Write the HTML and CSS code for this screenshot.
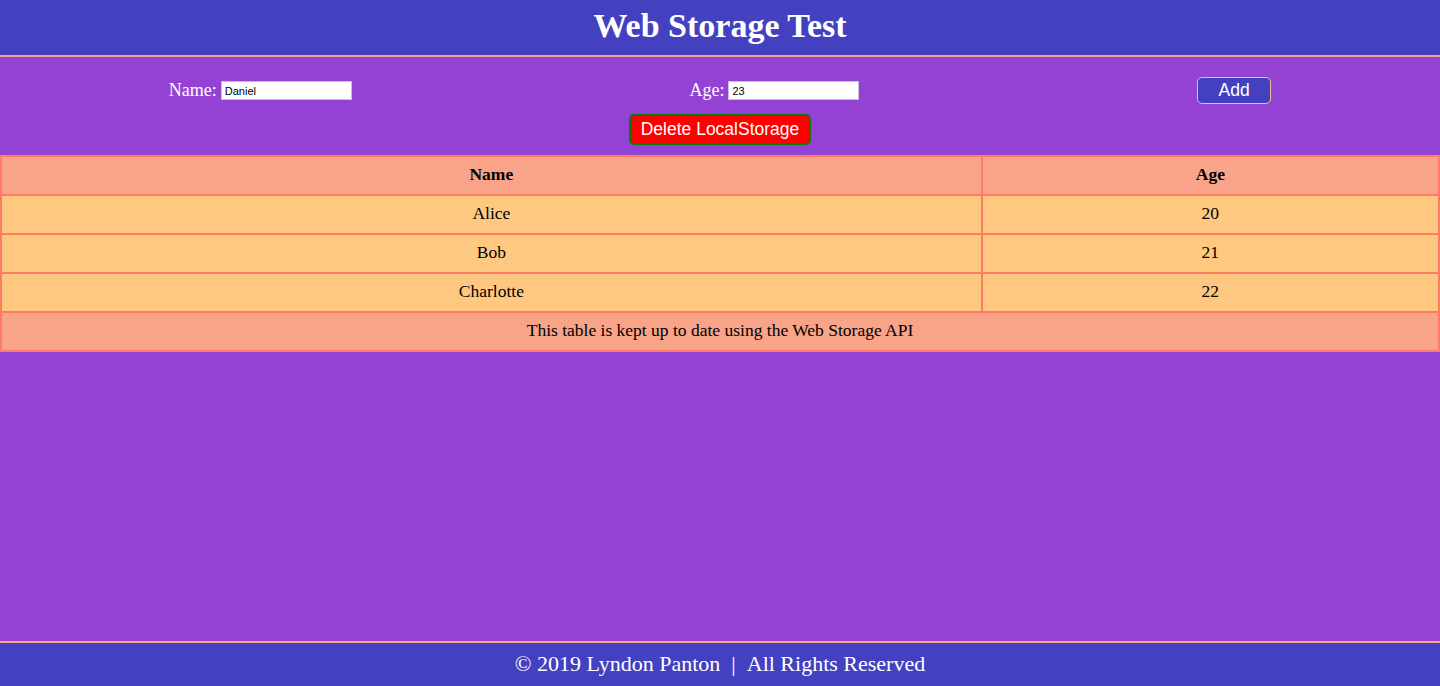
FILE: index.html
```html
<!DOCTYPE html>
<html lang="en">
<head>
<meta charset="utf-8">
<title>Web Storage Test</title>
<link rel="stylesheet" href="styles.css">
</head>
<body>
<header class="site-header">
  <h1 class="title">Web Storage Test</h1>
</header>
<main class="main">
  <form class="entry-form">
    <div class="fields">
      <label class="field">Name: <input class="text-input" type="text" value="Daniel"></label>
      <label class="field">Age: <input class="text-input" type="text" value="23"></label>
      <button type="button" class="btn-add">Add</button>
    </div>
    <div class="delete-row">
      <button type="button" class="btn-delete">Delete LocalStorage</button>
    </div>
  </form>
  <table class="people">
    <thead>
      <tr><th class="col-name">Name</th><th>Age</th></tr>
    </thead>
    <tbody>
      <tr><td>Alice</td><td>20</td></tr>
      <tr><td>Bob</td><td>21</td></tr>
      <tr><td>Charlotte</td><td>22</td></tr>
    </tbody>
    <tfoot>
      <tr><td colspan="2">This table is kept up to date using the Web Storage API</td></tr>
    </tfoot>
  </table>
</main>
<footer class="site-footer">
  © 2019 Lyndon Panton&nbsp; | &nbsp;All Rights Reserved
</footer>
</body>
</html>
```
FILE: styles.css
```css
* { box-sizing: border-box; }
html, body { margin: 0; padding: 0; height: 100%; }
body {
  display: flex;
  flex-direction: column;
  min-height: 100vh;
  font-family: "Palatino Linotype", Palatino, "Book Antiqua", "Liberation Serif", serif;
  background: #9442d4;
  color: #000;
}
.site-header {
  background: #4441c1;
  border-bottom: 2px solid #f9a286;
  height: 57px;
  display: flex;
  align-items: center;
  justify-content: center;
}
.title {
  margin: 0;
  color: #fff;
  font-size: 34px;
  font-weight: bold;
  line-height: 1;
  padding-bottom: 4px;
}
.main {
  flex: 1;
  background: #9442d4;
}
.entry-form {
  padding-top: 20px;
  padding-bottom: 10px;
}
.fields {
  display: flex;
  justify-content: space-around;
  align-items: center;
  height: 27px;
}
.field {
  color: #fff;
  font-size: 18px;
  display: flex;
  align-items: center;
  gap: 4px;
}
.text-input {
  width: 131px;
  height: 19px;
  border: 1px solid #c9bfe0;
  background: #fff;
  font-family: "Liberation Sans", Arial, sans-serif;
  font-size: 11px;
  padding: 1px 3px;
  margin: 0;
  color: #000;
}
.btn-add {
  width: 74px;
  height: 27px;
  background: #4441c1;
  color: #fff;
  border: 1px solid #f2c08f;
  border-radius: 5px;
  font-family: "Liberation Sans", Arial, sans-serif;
  font-size: 17.5px;
  padding: 0;
}
.delete-row {
  display: flex;
  justify-content: center;
  margin-top: 10px;
}
.btn-delete {
  width: 182px;
  height: 31px;
  background: #ff0000;
  color: #fff;
  border: 2px solid #0a7a0a;
  border-radius: 5px;
  font-family: "Liberation Sans", Arial, sans-serif;
  font-size: 17.5px;
  padding: 0;
}
.people {
  width: 100%;
  border-collapse: collapse;
  font-size: 17.5px;
}
.people th, .people td {
  border: 2px solid #ff7b63;
  text-align: center;
  height: 39px;
  padding: 0 0 2px;
}
.people thead th, .people tfoot td { background: #f9a389; }
.people tbody td { background: #ffc880; }
.col-name { width: 68.2%; }
.site-footer {
  background: #4441c1;
  border-top: 2px solid #f9a286;
  height: 45px;
  color: #fff;
  font-size: 22px;
  display: flex;
  align-items: center;
  justify-content: center;
  padding-bottom: 2px;
}
```
